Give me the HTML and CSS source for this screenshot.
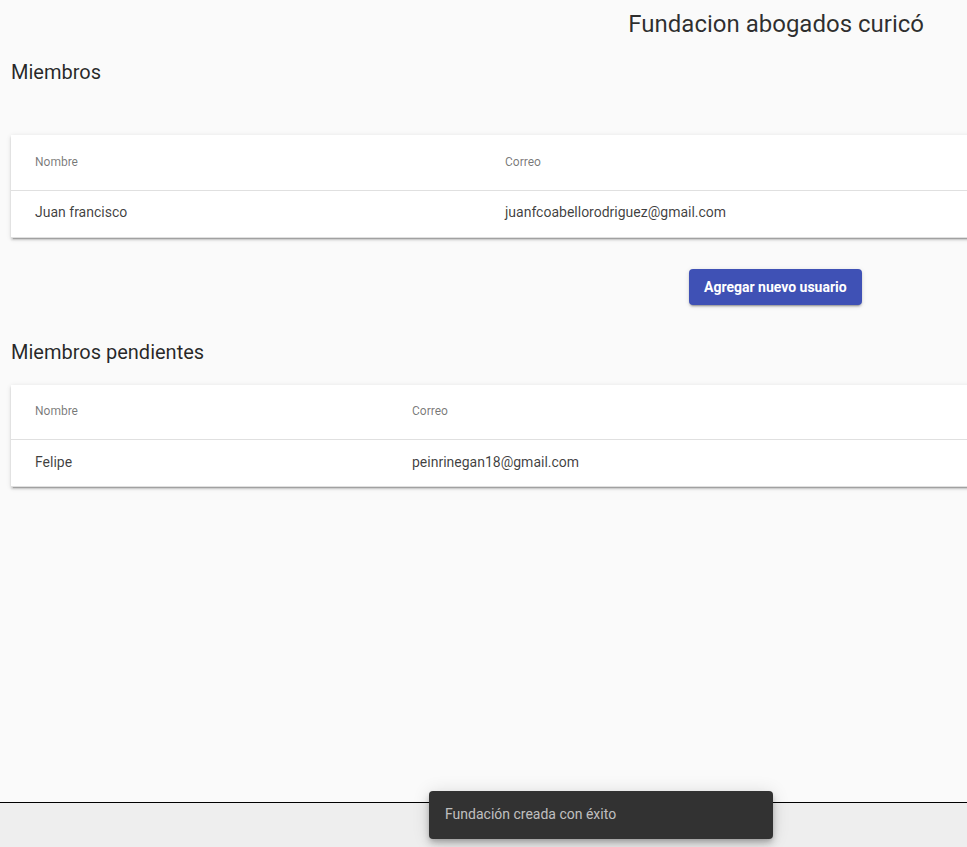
FILE: index.html
```html
<!DOCTYPE html>
<html lang="es">
<head>
<meta charset="utf-8">
<title>Fundacion abogados curicó</title>
<link rel="stylesheet" href="styles.css">
</head>
<body>
<div class="app">
  <main class="main">
    <header class="topbar">
      <span class="foundation-name">Fundacion abogados curicó</span>
    </header>
    <section class="content">
      <h2 class="section-title">Miembros</h2>
      <div class="card card-members">
        <table class="data-table table-members">
          <thead>
            <tr><th class="col-name">Nombre</th><th>Correo</th></tr>
          </thead>
          <tbody>
            <tr><td>Juan francisco</td><td>juanfcoabellorodriguez@gmail.com</td></tr>
          </tbody>
        </table>
      </div>
      <div class="actions">
        <button class="btn-primary" type="button">Agregar nuevo usuario</button>
      </div>
      <h2 class="section-title section-title-pending">Miembros pendientes</h2>
      <div class="card card-pending">
        <table class="data-table table-pending">
          <thead>
            <tr><th class="col-name">Nombre</th><th>Correo</th></tr>
          </thead>
          <tbody>
            <tr><td>Felipe</td><td>peinrinegan18@gmail.com</td></tr>
          </tbody>
        </table>
      </div>
    </section>
  </main>
  <footer class="footer"></footer>
  <div class="snackbar">Fundación creada con éxito</div>
</div>
</body>
</html>
```
FILE: styles.css
```css
html, body {
  margin: 0;
  padding: 0;
  height: 100%;
  overflow: hidden;
}
body {
  background: #fafafa;
  font-family: Roboto, "Liberation Sans", sans-serif;
  color: rgba(0, 0, 0, 0.87);
}
.app {
  position: relative;
  display: flex;
  flex-direction: column;
  min-height: 100vh;
  overflow: hidden;
}
.main {
  flex: 1;
}
.topbar {
  display: flex;
  justify-content: flex-end;
  height: 48px;
  padding-right: 43px;
}
.foundation-name {
  font-size: 24px;
  line-height: 48px;
  font-weight: 400;
  color: rgba(0, 0, 0, 0.82);
}
.content {
  padding-left: 11px;
}
.section-title {
  margin: 8px 0 0;
  font-size: 20px;
  line-height: 32px;
  font-weight: 400;
  color: rgba(0, 0, 0, 0.85);
}
.section-title-pending {
  margin-top: 31px;
}
.card {
  background: #fff;
  width: 1100px;
  box-shadow: 0 3px 1px -2px rgba(0,0,0,.2), 0 2px 2px 0 rgba(0,0,0,.14), 0 1px 5px 0 rgba(0,0,0,.12);
}
.card-members {
  margin-top: 47px;
}
.card-pending {
  margin-top: 17px;
}
.data-table {
  width: 100%;
  border-collapse: collapse;
  border-spacing: 0;
}
.data-table th,
.data-table td {
  text-align: left;
  padding: 0 0 0 24px;
  border-bottom: 1px solid rgba(0, 0, 0, 0.12);
  vertical-align: middle;
  box-sizing: border-box;
}
.data-table th {
  height: 55px;
  padding-bottom: 1px;
  font-size: 12px;
  font-weight: 400;
  color: rgba(0, 0, 0, 0.54);
}
.data-table td {
  height: 47px;
  padding-bottom: 3px;
  font-size: 14px;
  color: rgba(0, 0, 0, 0.76);
}
.table-members .col-name {
  width: 470px;
}
.table-pending .col-name {
  width: 377px;
}
.actions {
  margin-top: 31px;
  padding-left: 678px;
  display: flex;
}
.btn-primary {
  height: 36px;
  padding: 0 15px;
  border: none;
  border-radius: 4px;
  background: #3f51b5;
  color: #fff;
  font-family: Roboto, "Liberation Sans", sans-serif;
  font-size: 14px;
  font-weight: 700;
  line-height: 36px;
  box-shadow: 0 3px 1px -2px rgba(0,0,0,.2), 0 2px 2px 0 rgba(0,0,0,.14), 0 1px 5px 0 rgba(0,0,0,.12);
}
.footer {
  height: 44px;
  border-top: 1px solid #000;
  background: #eeeeee;
}
.snackbar {
  position: absolute;
  left: 429px;
  bottom: 8px;
  width: 344px;
  height: 48px;
  box-sizing: border-box;
  padding: 0 16px;
  background: #323232;
  border-radius: 4px;
  color: rgba(255, 255, 255, 0.7);
  font-size: 14px;
  line-height: 46px;
  box-shadow: 0 3px 5px -1px rgba(0,0,0,.2), 0 6px 10px 0 rgba(0,0,0,.14), 0 1px 18px 0 rgba(0,0,0,.12);
}
```
